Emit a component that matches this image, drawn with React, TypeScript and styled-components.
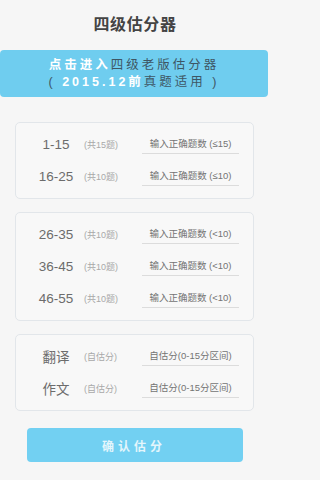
import React from "react";
import styled, { createGlobalStyle } from "styled-components";

const GlobalStyle = createGlobalStyle`
  html, body {
    margin: 0;
    padding: 0;
    background: #f6f6f6;
  }
  body {
    font-family: "Liberation Sans", "Noto Sans CJK SC", sans-serif;
  }
`;

const Page = styled.div`
  width: 270px;
  min-height: 480px;
  background: #f6f6f6;
  display: flex;
  flex-direction: column;
`;

const Title = styled.div`
  height: 50px;
  line-height: 50px;
  text-align: center;
  font-size: 16px;
  font-weight: 700;
  letter-spacing: 0.6px;
  color: #444;
`;

const Banner = styled.div`
  margin-right: 2px;
  height: 47px;
  border-radius: 4px;
  background: #6fcdef;
  display: flex;
  flex-direction: column;
  justify-content: center;
  align-items: center;
  font-size: 12.5px;
  line-height: 17px;
  letter-spacing: 3px;
  color: #3e5664;
  cursor: pointer;
`;

const BannerLine = styled.div`
  white-space: nowrap;
`;

const Strong = styled.span`
  color: #ffffff;
  font-weight: 700;
`;

const CardList = styled.div`
  display: flex;
  flex-direction: column;
  gap: 13px;
  margin: 25px 16px 0 15px;
`;

const Card = styled.div`
  border: 1px solid #e2e6ea;
  border-radius: 5px;
  background: #f8f8f8;
  padding: 5px 0 6px;
`;

const Row = styled.div`
  height: 32px;
  display: grid;
  grid-template-columns: 40px 58px 97px;
  column-gap: 8px;
  align-items: center;
  padding-left: 20px;
`;

const Label = styled.div`
  text-align: center;
  font-size: 13.5px;
  color: #6c6c6c;
  white-space: nowrap;
`;

const Note = styled.div`
  font-size: 9px;
  color: #a8a8a8;
  white-space: nowrap;
`;

const Field = styled.input`
  box-sizing: border-box;
  width: 97px;
  height: 20px;
  margin-left: -8px;
  padding: 0;
  border: none;
  border-bottom: 1px solid #dcdcdc;
  background: transparent;
  text-align: center;
  font-family: "Liberation Sans", "Noto Sans CJK SC", sans-serif;
  font-size: 9.5px;
  color: #555;
  outline: none;
  &::placeholder {
    color: #747474;
  }
`;

const ConfirmButton = styled.button`
  margin: 17px 27px 0;
  height: 34px;
  border: none;
  border-radius: 4px;
  background: #72d0f2;
  color: #e4f6fc;
  font-family: "Liberation Sans", "Noto Sans CJK SC", sans-serif;
  font-size: 12px;
  font-weight: 700;
  letter-spacing: 4px;
  padding-left: 4px;
  cursor: pointer;
`;

type Item = { label: string; note: string; hint: string };

const groups: Item[][] = [
  [
    { label: "1-15", note: "(共15题)", hint: "输入正确题数 (≤15)" },
    { label: "16-25", note: "(共10题)", hint: "输入正确题数 (≤10)" },
  ],
  [
    { label: "26-35", note: "(共10题)", hint: "输入正确题数 (<10)" },
    { label: "36-45", note: "(共10题)", hint: "输入正确题数 (<10)" },
    { label: "46-55", note: "(共10题)", hint: "输入正确题数 (<10)" },
  ],
  [
    { label: "翻译", note: "(自估分)", hint: "自估分(0-15分区间)" },
    { label: "作文", note: "(自估分)", hint: "自估分(0-15分区间)" },
  ],
];

const App = () => {
  return (
    <Page>
      <GlobalStyle />
      <Title>四级估分器</Title>
      <Banner>
        <BannerLine>
          <Strong>点击进入</Strong>四级老版估分器
        </BannerLine>
        <BannerLine>
          ( <Strong>2015.12前</Strong>真题适用 )
        </BannerLine>
      </Banner>
      <CardList>
        {groups.map((group, gi) => (
          <Card key={gi}>
            {group.map((item) => (
              <Row key={item.label}>
                <Label>{item.label}</Label>
                <Note>{item.note}</Note>
                <Field placeholder={item.hint} />
              </Row>
            ))}
          </Card>
        ))}
      </CardList>
      <ConfirmButton>确认估分</ConfirmButton>
    </Page>
  );
};

export default App;
